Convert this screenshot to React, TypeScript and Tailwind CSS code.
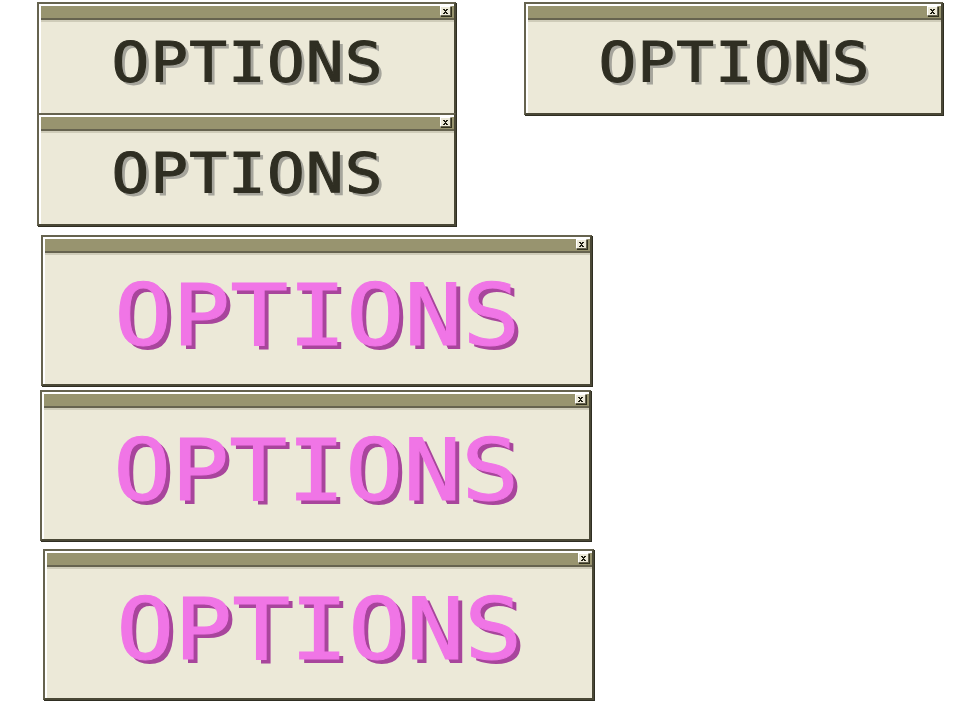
function CloseButton() {
  return (
    <div className="absolute right-[3px] top-0 flex h-[10px] w-[11px] items-center justify-center border-t border-l border-t-white border-l-white border-r border-b border-r-[#66634f] border-b-[#66634f] bg-[#ece9d8] shadow-[1px_1px_0_#33321f]">
      <svg width="5" height="5" viewBox="0 0 5 5" shapeRendering="crispEdges">
        <path d="M0 0h2v1H0zM3 0h2v1H3zM1 1h3v1H1zM2 2h1v1H2zM1 3h3v1H1zM0 4h2v1H0zM3 4h2v1H3z" fill="#1c1b10" />
      </svg>
    </div>
  );
}

function OptionsWindow({ className, textClass }: { className: string; textClass: string }) {
  return (
    <div className={`absolute flex flex-col border-2 border-t-[#66634f] border-l-[#66634f] border-r-[#4a4836] border-b-[#4a4836] shadow-[1px_1px_0_#2f2e22] ${className}`}>
      <div className="flex flex-1 flex-col border-t-2 border-l-2 border-t-white border-l-white bg-[#ece9d8]">
        <div className="relative h-[12px] shrink-0 bg-[#98946f]">
          <CloseButton />
        </div>
        <div className="h-[2px] shrink-0 bg-[#66634f]" />
        <div className="h-[2px] shrink-0 bg-[#cfccb9]" />
        <div className="flex flex-1 items-center justify-center">
          <span className={`inline-block scale-x-[1.12] whitespace-nowrap font-['DejaVu_Sans_Mono',monospace] ${textClass}`}>OPTIONS</span>
        </div>
      </div>
    </div>
  );
}

const dark =
  "-mt-[12px] text-[56px] leading-none tracking-[1px] text-[#2f2e22] [-webkit-text-stroke:1px_#2f2e22] [text-shadow:3px_3px_0_#a6a59c]";
const pink =
  "-mt-[10px] text-[86px] leading-none tracking-[0px] text-[#f075e6] [-webkit-text-stroke:1px_#f075e6] [text-shadow:4px_4px_0_#a8459c]";

export default function App() {
  return (
    <div className="relative h-[720px] w-[980px] overflow-hidden bg-white">
      <OptionsWindow className="left-[37px] top-[2px] h-[113px] w-[419px]" textClass={dark} />
      <OptionsWindow className="left-[524px] top-[2px] h-[113px] w-[419px]" textClass={dark} />
      <OptionsWindow className="left-[37px] top-[113px] h-[113px] w-[419px]" textClass={dark} />
      <OptionsWindow className="left-[41px] top-[235px] h-[151px] w-[551px]" textClass={pink} />
      <OptionsWindow className="left-[40px] top-[390px] h-[151px] w-[551px]" textClass={pink} />
      <OptionsWindow className="left-[43px] top-[549px] h-[151px] w-[551px]" textClass={pink} />
    </div>
  );
}
